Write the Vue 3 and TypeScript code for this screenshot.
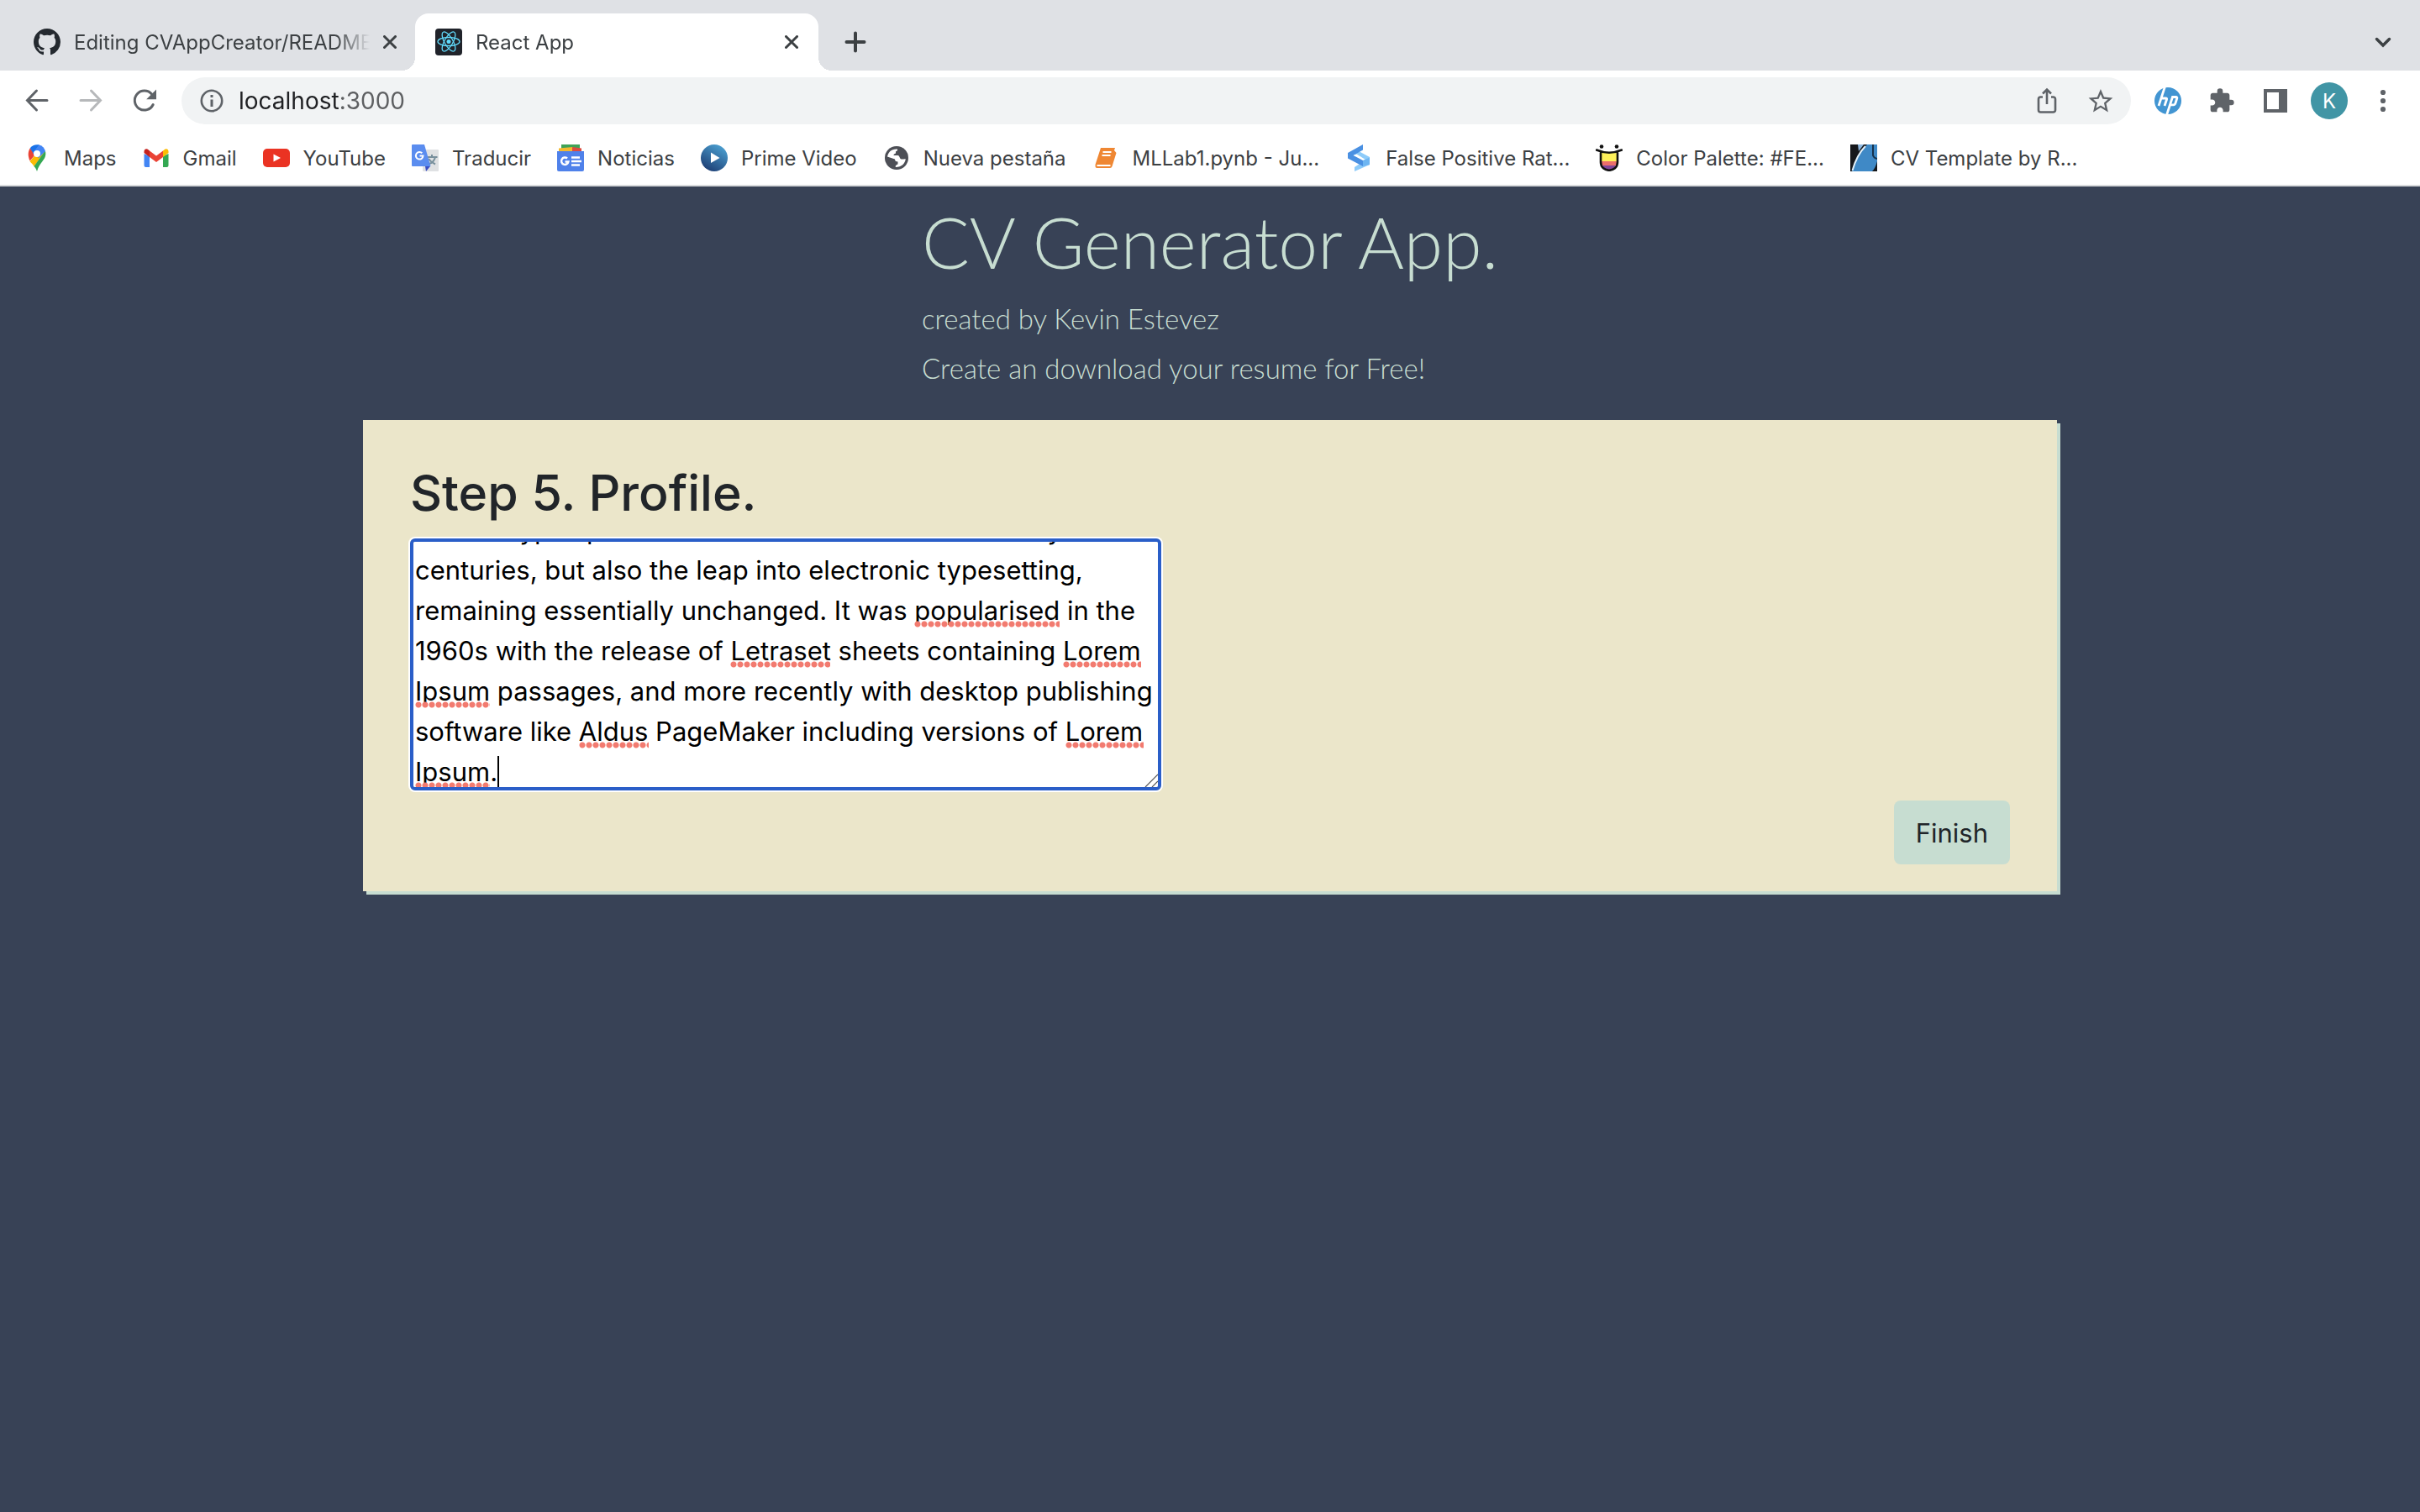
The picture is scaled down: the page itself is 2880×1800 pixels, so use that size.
<script setup lang="ts">
import { computed, nextTick, onMounted, ref } from 'vue'

interface Bookmark {
  icon: string
  label: string
}

interface Mark {
  left: number
  top: number
  width: number
}

const bookmarks: Bookmark[] = [
  { icon: 'maps', label: 'Maps' },
  { icon: 'gmail', label: 'Gmail' },
  { icon: 'youtube', label: 'YouTube' },
  { icon: 'translate', label: 'Traducir' },
  { icon: 'news', label: 'Noticias' },
  { icon: 'prime', label: 'Prime Video' },
  { icon: 'globe', label: 'Nueva pestaña' },
  { icon: 'book', label: 'MLLab1.pynb - Ju...' },
  { icon: 'stack', label: 'False Positive Rat...' },
  { icon: 'palette', label: 'Color Palette: #FE...' },
  { icon: 'template', label: 'CV Template by R...' },
]

const fontStack = "Inter, 'Liberation Sans', sans-serif"
const pen = document.createElement('canvas').getContext('2d')

function measure(text: string, size: number): number {
  if (!pen) return 0
  pen.font = `${size}px ${fontStack}`
  return pen.measureText(text).width
}

const address = ref('localhost:3000')

// The port is drawn fainter than the host name.
const addressMask = computed(() => {
  const edge = `${Math.round(measure(address.value.split(':')[0], 28))}px`
  return `linear-gradient(to right, #000 ${edge}, rgb(0 0 0 / 0.7) ${edge})`
})

const profile = ref(
  [
    'Lorem Ipsum is simply dummy text of the printing and',
    'typesetting industry. Lorem Ipsum has been the',
    "industry's standard dummy text ever since the 1500s,",
    'when an unknown printer took a galley of type and',
    'scrambled it to',
    'make a type specimen book. It has survived not only five',
    'centuries, but also the leap into electronic typesetting,',
    'remaining essentially unchanged. It was popularised in the',
    '1960s with the release of Letraset sheets containing Lorem',
    'Ipsum passages, and more recently with desktop publishing',
    'software like Aldus PageMaker including versions of Lorem',
    'Ipsum.',
  ].join('\n'),
)

const textSize = 31
const lineHeight = 48
const inset = 2
const scrolled = ref(0)
const lines = computed(() => profile.value.split('\n'))

// Dotted marks under the words that the spelling check does not know.
const marks = computed<Mark[]>(() =>
  lines.value.flatMap((line, row) =>
    [...line.matchAll(/popularised|Letraset|Lorem|Ipsum|Aldus/g)].map((match) => ({
      left: Math.round(inset + measure(line.slice(0, match.index), textSize)),
      top: row * lineHeight + 38 - scrolled.value,
      width: Math.round(measure(match[0], textSize)),
    })),
  ),
)

const caret = computed(() => {
  const row = lines.value.length - 1
  return {
    left: `${Math.round(inset + measure(lines.value[row], textSize))}px`,
    top: `${row * lineHeight + 7 - scrolled.value}px`,
  }
})

const field = ref<HTMLTextAreaElement | null>(null)

function trackScroll() {
  if (field.value) scrolled.value = field.value.scrollTop
}

onMounted(async () => {
  await nextTick()
  const el = field.value
  if (!el) return
  el.scrollTop = el.scrollHeight - el.clientHeight - 8
  trackScroll()
})
</script>

<template>
  <div class="window">
    <header class="chrome">
      <div class="tabs">
        <div class="tab">
          <svg class="favicon" viewBox="0 0 16 16" aria-hidden="true">
            <path fill="#24292f" d="M8 0C3.58 0 0 3.58 0 8c0 3.54 2.29 6.53 5.47 7.59.4.07.55-.17.55-.38 0-.19-.01-.82-.01-1.49-2.01.37-2.53-.49-2.69-.94-.09-.23-.48-.94-.82-1.13-.28-.15-.68-.52-.01-.53.63-.01 1.08.58 1.23.82.72 1.21 1.87.87 2.33.66.07-.52.28-.87.51-1.07-1.78-.2-3.64-.89-3.64-3.95 0-.87.31-1.59.82-2.15-.08-.2-.36-1.02.08-2.12 0 0 .67-.21 2.2.82.64-.18 1.32-.27 2-.27s1.36.09 2 .27c1.53-1.04 2.2-.82 2.2-.82.44 1.1.16 1.92.08 2.12.51.56.82 1.27.82 2.15 0 3.07-1.87 3.75-3.65 3.95.29.25.54.73.54 1.48 0 1.07-.01 1.93-.01 2.2 0 .21.15.46.55.38A8.01 8.01 0 0 0 16 8c0-4.42-3.58-8-8-8z" />
          </svg>
          <span class="tab-title">Editing CVAppCreator/README</span>
          <button class="tab-close" type="button" aria-label="Close tab">
            <svg viewBox="0 0 16 16"><path d="M1.500 1.500l13 13M14.500 1.500l-13 13" /></svg>
          </button>
        </div>
        <div class="tab active">
          <svg class="favicon" viewBox="0 0 32 32" aria-hidden="true">
            <rect width="32" height="32" rx="4" fill="#20232a" />
            <g fill="none" stroke="#61dafb" stroke-width="1.300">
              <ellipse cx="16" cy="15.500" rx="13" ry="5" />
              <ellipse cx="16" cy="15.500" rx="13" ry="5" transform="rotate(60 16 15.500)" />
              <ellipse cx="16" cy="15.500" rx="13" ry="5" transform="rotate(120 16 15.500)" />
            </g>
            <circle cx="16" cy="15.500" r="2.500" fill="#61dafb" />
          </svg>
          <span class="tab-title">React App</span>
          <button class="tab-close" type="button" aria-label="Close tab">
            <svg viewBox="0 0 16 16"><path d="M1.500 1.500l13 13M14.500 1.500l-13 13" /></svg>
          </button>
        </div>
        <button class="strip-button" type="button" aria-label="New tab">
          <svg viewBox="0 0 32 32"><path d="M16 5.500v21M5.500 16h21" stroke-width="4" /></svg>
        </button>
        <button class="strip-button search" type="button" aria-label="Search tabs">
          <svg viewBox="0 0 32 32"><path d="M8.500 12.500l7.500 7.500 7.500-7.500" stroke-width="3.500" /></svg>
        </button>
      </div>

      <div class="toolbar">
        <div class="nav">
          <button type="button" aria-label="Back">
            <svg viewBox="0 0 32 32"><path class="line" d="M28 15.500H5M15.500 4L4.500 15.500l11 11.500" /></svg>
          </button>
          <button type="button" aria-label="Forward" class="faded">
            <svg viewBox="0 0 32 32"><path class="line" d="M4 15.500h23M16.500 4l11 11.500-11 11.500" /></svg>
          </button>
          <button type="button" aria-label="Reload">
            <svg viewBox="0 0 32 32">
              <path class="line" d="M26.200 20.500A11.500 11.500 0 1 1 24.500 8" />
              <path fill="#5f6368" d="M30 2.500v11.800H18.200z" />
            </svg>
          </button>
        </div>

        <div class="omnibox">
          <svg class="info" viewBox="0 0 28 28" aria-hidden="true">
            <circle cx="14" cy="14" r="12.200" fill="none" stroke="#5f6368" stroke-width="2.600" />
            <path fill="#5f6368" d="M12.500 12.500h3V21h-3zM12.500 7h3v3h-3z" />
          </svg>
          <input
            v-model="address"
            class="address"
            type="text"
            aria-label="Address and search bar"
            :style="{ maskImage: addressMask }"
          />
          <button type="button" aria-label="Share">
            <svg viewBox="0 0 32 32">
              <path d="M11 11.500H8.500A2.500 2.500 0 0 0 6 14v13a2.500 2.500 0 0 0 2.500 2.500h15A2.500 2.500 0 0 0 26 27V14a2.500 2.500 0 0 0-2.500-2.500H21M16 20V3.500M11 7.500l5-5 5 5" fill="none" stroke="#5f6368" stroke-width="2.600" />
            </svg>
          </button>
          <button type="button" aria-label="Bookmark this page">
            <svg viewBox="0 0 24 24">
              <path fill="#5f6368" d="M22 9.240l-7.190-.62L12 2 9.190 8.630 2 9.240l5.460 4.730L5.820 21 12 17.270 18.180 21l-1.630-7.030L22 9.240zM12 15.400l-3.760 2.270 1-4.280-3.320-2.880 4.380-.38L12 6.100l1.710 4.040 4.380.38-3.320 2.880 1 4.280L12 15.400z" transform="translate(-1 -.600) scale(1.080)" />
            </svg>
          </button>
        </div>

        <div class="actions">
          <button type="button" aria-label="HP extension">
            <svg viewBox="0 0 32 32">
              <circle cx="16" cy="16" r="16" fill="#4295d2" />
              <path d="M12.500-1L5 22M9 13h4.500q1.500 0 1 1.500L12 22M14.500 33L21.500 11.500h4q1.800 0 1.200 1.800l-1.800 5.700q-.5 1.800-2.200 1.800h-3.500" fill="none" stroke="#fff" stroke-width="2.800" />
            </svg>
          </button>
          <button type="button" aria-label="Extensions">
            <svg viewBox="0 0 24 24">
              <path fill="#5f6368" d="M20.500 11H19V7c0-1.100-.9-2-2-2h-4V3.500a2.500 2.500 0 0 0-5 0V5H4c-1.100 0-1.990.9-1.990 2v3.800H3.500c1.490 0 2.700 1.210 2.700 2.700s-1.210 2.700-2.700 2.700H2V20c0 1.100.9 2 2 2h3.800v-1.500c0-1.490 1.210-2.700 2.700-2.700s2.700 1.210 2.700 2.700V22H17c1.100 0 2-.9 2-2v-4h1.500a2.500 2.500 0 0 0 0-5z" />
            </svg>
          </button>
          <button type="button" aria-label="Side panel">
            <svg viewBox="0 0 32 32"><path fill="#5f6368" fill-rule="evenodd" d="M2 2h28v28H2zM6 6v20h14V6z" /></svg>
          </button>
          <button type="button" class="avatar" aria-label="Profile K">K</button>
          <button type="button" aria-label="Menu">
            <svg viewBox="0 0 32 32" fill="#5f6368">
              <circle cx="16" cy="6" r="3.100" /><circle cx="16" cy="16" r="3.100" /><circle cx="16" cy="26" r="3.100" />
            </svg>
          </button>
        </div>
      </div>

      <nav class="bookmarks" aria-label="Bookmarks">
        <a v-for="item in bookmarks" :key="item.label" href="#">
          <svg v-if="item.icon === 'maps'" viewBox="0 0 32 32">
            <path fill="#fbbc04" d="M7.500 20l11-13L26 8 12.500 26.200C11 23.500 9 22 7.500 20z" />
            <path fill="#34a853" d="M12.500 26L25.800 7.500C27.500 13 25 17 22.500 20 20 23.500 17.500 26.500 16 32c-1-3-2-4.300-3.500-6z" />
            <path fill="#ea4335" d="M8 4.200C5 8 5 14 7.500 19.500L14 12z" />
            <path fill="#1a73e8" d="M7.800 4.300C10.500 1 14.500-.5 19 .6L12 11.500z" />
            <path fill="#4285f4" d="M18.500.5c4 1 6.500 3.800 7.500 7.500l-8 8-7-6z" />
            <circle cx="16" cy="11" r="4" fill="#fff" />
          </svg>
          <svg v-else-if="item.icon === 'gmail'" viewBox="0 0 32 32">
            <path fill="#4285f4" d="M1.500 11v14a2 2 0 0 0 2 2H8V14z" />
            <path fill="#34a853" d="M24 14v13h4.500a2 2 0 0 0 2-2V11z" />
            <path fill="#fbbc04" d="M24 7.500V15l6.500-5V8.500c0-3-2.800-4-5-2.300z" />
            <path fill="#ea4335" d="M8 15V7.500l8 6 8-6V15l-8 6z" />
            <path fill="#c5221f" d="M1.500 8.500V10L8 15V7.500L6.500 6.200C4.300 4.500 1.500 5.500 1.500 8.500z" />
          </svg>
          <svg v-else-if="item.icon === 'youtube'" viewBox="0 0 32 32">
            <rect y="5" width="32" height="22" rx="5" fill="#ea3323" />
            <path fill="#fff" d="M12.500 11.500l8.500 4.500-8.500 4.500z" />
          </svg>
          <svg v-else-if="item.icon === 'translate'" viewBox="0 0 32 32">
            <rect x="13" y="6" width="19" height="26" rx="1" fill="#dfe1e3" />
            <path d="M17.500 15h13M24 12v3M28 15c-1 4-4 7-7 8M20 17c2 3 5 5 8 6.500" fill="none" stroke="#78909c" stroke-width="2" />
            <path fill="#3b4fc4" d="M16 26h6l-5 6z" />
            <path fill="#5b8def" d="M1 0h14l7.500 26H1a1 1 0 0 1-1-1V1a1 1 0 0 1 1-1z" />
            <path d="M12.300 10.300A4.300 4.300 0 1 0 13.500 13.500H9.500" fill="none" stroke="#fff" stroke-width="2" />
          </svg>
          <svg v-else-if="item.icon === 'news'" viewBox="0 0 32 32">
            <path fill="#3fa356" d="M5 0h22v8H5z" />
            <path fill="#f4b92f" d="M2 4.500L19 3v7H2z" />
            <path fill="#dc4c3f" d="M18 3l11 1.500V10H18z" />
            <path fill="#4f81ea" d="M0 8h32v22a2 2 0 0 1-2 2H2a2 2 0 0 1-2-2z" />
            <path d="M12 16.500a4.200 4.200 0 1 0 1.400 4H9.500M17 15.500h10M17 20h12M17 24.500h10" fill="none" stroke="#fff" stroke-width="2.500" />
          </svg>
          <svg v-else-if="item.icon === 'prime'" viewBox="0 0 32 32">
            <defs>
              <linearGradient id="primeFill" x1=".8" y1="0" x2=".2" y2="1">
                <stop offset="0" stop-color="#4da3d4" /><stop offset="1" stop-color="#1b3a70" />
              </linearGradient>
            </defs>
            <circle cx="16" cy="16" r="16" fill="url(#primeFill)" />
            <path fill="#fff" d="M12 9.500L22.500 16 12 22z" />
          </svg>
          <svg v-else-if="item.icon === 'globe'" viewBox="0 0 32 32">
            <circle cx="16" cy="16" r="14" fill="#4d4f56" />
            <path fill="#fff" d="M5 14.500C6 9 10 5 17 5.500c.5 1.500-.5 2.500-2 2.700v2.300c-1.500.5-2.500 1-2.500 2.500h5c2 0 2 3.500 3.500 4.200 1.500.6 3.500-.2 5.800 0C26 22.500 22 27 15 27c-1-1.500 1-3 2.500-3.500v-3c-2.500 0-3.500-1-3.500-3z" />
          </svg>
          <svg v-else-if="item.icon === 'book'" viewBox="0 0 32 32">
            <path fill="#ef8733" d="M10 4h17l-1 3 2.500 3-5 16q-.6 2-2.500 2H5q-2-1-1.500-4z" />
            <path d="M12.500 9h10M11.500 13h10M5.500 25H21.500" fill="none" stroke="#fff" stroke-width="2" />
          </svg>
          <svg v-else-if="item.icon === 'stack'" viewBox="0 0 32 32">
            <path fill="#8dcbfa" d="M11 11l5-3 13 7v9L11 32v-5l6-4z" />
            <path fill="#fff" d="M9.500 13l4-1.500L24 18l-4 1.500z" />
            <path fill="#4a90e2" d="M21 0v6.500L9.500 13 21 19v7L3 16.500V10z" />
            <path fill="#6db5f2" d="M21 19l8-3.500V24l-8 2z" />
          </svg>
          <svg v-else-if="item.icon === 'palette'" viewBox="0 0 32 32">
            <path fill="#fdf05a" d="M6 9h20v11H6z" />
            <path fill="#ec6f6b" d="M6 20h20v5H6z" />
            <path fill="#82479b" d="M8 25h16q-3 6-8 6t-8-6z" />
            <path d="M6 10v11c0 13 20 13 20 0V10M1 6.500Q16 13 31 6.500" fill="none" stroke="#111" stroke-width="2.600" stroke-linecap="round" />
            <circle cx="7" cy="2.500" r="2.300" fill="#111" /><circle cx="25" cy="2.500" r="2.300" fill="#111" />
          </svg>
          <svg v-else viewBox="0 0 32 32">
            <rect width="32" height="32" fill="#16181c" />
            <path fill="#3f89c6" d="M20 0h12v20q-2 8-6 12H2Q8 12 20 0z" />
            <path fill="#8fb8e0" d="M9 0h7l-6 8z" />
            <path d="M18 2Q8 12 2.500 31" fill="none" stroke="#e3f1fa" stroke-width="2" />
            <path d="M27 0v13q1 3 5 4" fill="none" stroke="#16324c" stroke-width="2" />
          </svg>
          <span>{{ item.label }}</span>
        </a>
      </nav>
    </header>

    <main class="page">
      <div class="intro">
        <h1>CV Generator App.</h1>
        <p>created by Kevin Estevez</p>
        <p>Create an download your resume for Free!</p>
      </div>

      <form class="card" @submit.prevent>
        <h2><label for="profile">Step 5. Profile.</label></h2>
        <div class="editor">
          <textarea id="profile" ref="field" v-model="profile" spellcheck="false" @scroll="trackScroll"></textarea>
          <div class="marks" aria-hidden="true">
            <i
              v-for="(mark, i) in marks"
              :key="i"
              class="mark"
              :style="{ left: `${mark.left}px`, top: `${mark.top}px`, width: `${mark.width}px` }"
            ></i>
            <i class="caret" :style="caret"></i>
          </div>
          <svg class="grip" viewBox="0 0 16 16" aria-hidden="true">
            <path d="M1 16L16 1M9 16l7-7" fill="none" stroke="#555" stroke-width="1.200" />
          </svg>
        </div>
        <button class="finish" type="submit">Finish</button>
      </form>
    </main>
  </div>
</template>

<style>
body {
  margin: 0;
  background: #384256;
}
</style>

<style scoped>
* {
  box-sizing: border-box;
}

.window {
  min-height: 100vh;
  display: flex;
  flex-direction: column;
  font-family: Inter, 'Liberation Sans', sans-serif;
}

button {
  border: 0;
  padding: 0;
  background: none;
  font-family: inherit;
  display: flex;
  align-items: center;
  justify-content: center;
}

.chrome {
  background: #fff;
  border-bottom: 2px solid #d9dbdd;
  color: #3c4043;
}

.tabs {
  height: 84px;
  padding: 16px 28px 0 16px;
  display: flex;
  background: #dfe1e5;
}

.tab {
  position: relative;
  flex: 0 1 478px;
  min-width: 0;
  padding: 0 22px 0 24px;
  display: flex;
  align-items: center;
  gap: 16px;
  font-size: 24px;
}

.tab.active {
  flex-basis: 480px;
  padding-right: 24px;
  background: #fff;
  border-radius: 16px 16px 0 0;
}

.tab.active::before,
.tab.active::after {
  content: '';
  position: absolute;
  bottom: 0;
  width: 16px;
  height: 16px;
}

.tab.active::before {
  right: 100%;
  background: radial-gradient(circle at 0 0, transparent 16px, #fff 16px);
}

.tab.active::after {
  left: 100%;
  background: radial-gradient(circle at 100% 0, transparent 16px, #fff 16px);
}

.favicon {
  flex: none;
  width: 32px;
  height: 32px;
}

.tab-title {
  flex: 1;
  min-width: 0;
  overflow: hidden;
  white-space: nowrap;
  mask-image: linear-gradient(to left, transparent, #000 40px);
}

.tab-close svg {
  display: block;
  width: 16px;
  height: 16px;
  fill: none;
  stroke: #3c4043;
  stroke-width: 3;
  stroke-linecap: round;
}

.strip-button {
  width: 32px;
  margin-left: 28px;
}

.strip-button.search {
  margin-left: auto;
}

.strip-button svg {
  width: 32px;
  height: 32px;
  fill: none;
  stroke: #3c4043;
  stroke-linecap: round;
}

.toolbar {
  display: flex;
  align-items: center;
  padding: 8px 12px 8px 28px;
}

.nav {
  display: flex;
  gap: 32px;
}

.toolbar svg {
  width: 32px;
  height: 32px;
}

.line {
  fill: none;
  stroke: #5f6368;
  stroke-width: 3;
  stroke-linecap: round;
}

.faded {
  opacity: 0.45;
}

.omnibox {
  flex: 1;
  height: 56px;
  margin: 0 12px 0 28px;
  padding: 0 4px 0 22px;
  display: flex;
  align-items: center;
  border-radius: 28px;
  background: #f1f3f4;
}

.omnibox button,
.actions button {
  width: 64px;
}

.omnibox .info {
  width: 28px;
  height: 28px;
}

.address {
  flex: 1;
  min-width: 0;
  height: 40px;
  margin-left: 18px;
  border: 0;
  padding: 0;
  outline: 0;
  background: transparent;
  color: #202124;
  font-family: inherit;
  font-size: 28px;
}

.actions {
  display: flex;
  align-items: center;
}

.actions .avatar {
  width: 44px;
  height: 44px;
  margin: 0 10px;
  border-radius: 50%;
  background: #4195a5;
  color: #fff;
  font-size: 24px;
}

.bookmarks {
  height: 64px;
  padding-left: 28px;
  display: flex;
  align-items: center;
  gap: 31px;
}

.bookmarks a {
  display: flex;
  align-items: center;
  gap: 16px;
  color: #3c4043;
  font-size: 24px;
  white-space: nowrap;
  text-decoration: none;
}

.bookmarks svg {
  flex: none;
  width: 32px;
  height: 32px;
}

.page {
  flex: 1;
  padding-top: 16px;
  background: #384256;
}

.intro {
  width: fit-content;
  margin: 0 auto 32px;
  font-family: Papyrus, Lato, sans-serif;
  font-weight: 300;
  color: #c7ddd1;
}

.intro h1 {
  margin: 0 0 12px;
  font-size: 84px;
  line-height: 100px;
  font-weight: 300;
}

.intro p {
  margin: 0;
  font-size: 33px;
  line-height: 59px;
}

.card {
  width: 70%;
  margin: 0 auto;
  padding: 48px 56px 32px;
  background: #ebe6ca;
  box-shadow: 4px 4px 0 #c7ddd1;
}

.card h2 {
  margin: 0 0 16px;
  font-size: 59px;
  line-height: 77px;
  font-weight: 500;
  color: #212529;
}

.editor {
  position: relative;
  width: 894px;
  max-width: 100%;
  margin-bottom: 12px;
}

.editor textarea {
  display: block;
  width: 100%;
  height: 300px;
  margin: 0;
  padding: 2px;
  border: 4px solid #2a5ec8;
  border-radius: 6px;
  outline: 0;
  resize: none;
  overflow-y: scroll;
  scrollbar-width: none;
  background: #fff;
  color: #000;
  box-shadow: 0 0 0 2px #fff;
  font-family: inherit;
  font-size: 31px;
  line-height: 48px;
}

.marks {
  position: absolute;
  inset: 4px;
  overflow: hidden;
  pointer-events: none;
}

.mark {
  position: absolute;
  height: 8px;
  background: radial-gradient(circle, #f27b70 3px, transparent 4px) 0 0 / 8px 8px repeat-x;
}

.caret {
  position: absolute;
  width: 2px;
  height: 38px;
  background: #000;
}

.grip {
  position: absolute;
  right: 4px;
  bottom: 4px;
  width: 16px;
  height: 16px;
}

.finish {
  height: 76px;
  margin-left: auto;
  padding: 0 26px;
  border-radius: 8px;
  background: #c7ddd1;
  color: #212529;
  font-size: 31px;
}
</style>
